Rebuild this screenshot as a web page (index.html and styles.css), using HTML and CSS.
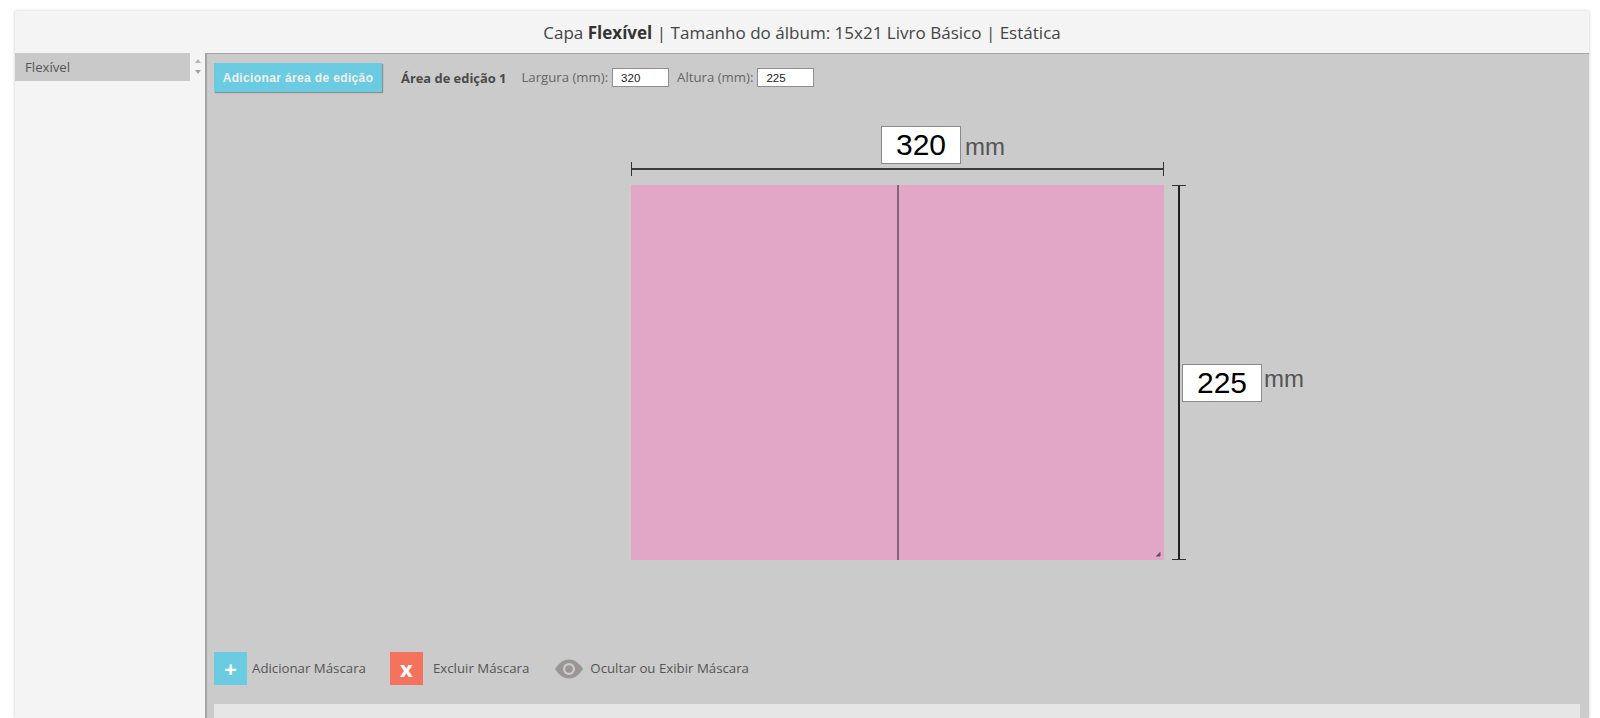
FILE: index.html
```html
<!DOCTYPE html>
<html lang="pt-BR">
<head>
<meta charset="utf-8">
<title>Capa Flexível</title>
<link rel="stylesheet" href="styles.css">
</head>
<body>
<div class="app">
  <header class="title">Capa <b>Flexível</b> | Tamanho do álbum: 15x21 Livro Básico | Estática</header>
  <div class="body">
    <aside class="side">
      <div class="list-item">Flexível</div>
      <div class="arrows"><span class="arrow up"></span><span class="arrow down"></span></div>
    </aside>
    <main class="main">
      <div class="toolbar">
        <button class="add-area">Adicionar área de edição</button>
        <strong class="area-name">Área de edição 1</strong>
        <label class="field">Largura (mm):<input class="small-input" value="320"></label>
        <label class="field">Altura (mm):<input class="small-input" value="225"></label>
      </div>
      <div class="stage">
        <div class="dim-h">
          <div class="dim-h-value"><input class="big-input" value="320"><span class="unit">mm</span></div>
          <div class="bar-h"></div>
        </div>
        <div class="blank"></div>
        <div class="sheet">
          <div class="fold"></div>
          <svg class="grip" width="5" height="5" viewBox="0 0 5 5"><path d="M4.500 .5 .5 4.500M4.500 2.500 2.500 4.500" stroke="#5f4252" stroke-width="1.200" fill="none"/></svg>
        </div>
        <div class="dim-v">
          <div class="bar-v"></div>
          <div class="dim-v-value"><input class="big-input" value="225"><span class="unit unit-v">mm</span></div>
        </div>
      </div>
      <div class="tools">
        <button class="tool"><span class="tool-icon blue">+</span><span class="tool-label near">Adicionar Máscara</span></button>
        <button class="tool"><span class="tool-icon red">x</span><span class="tool-label">Excluir Máscara</span></button>
        <button class="tool">
          <svg class="eye" width="28" height="20" viewBox="0 0 28 20"><path d="M0 10C4 3.500 9 .5 14 .5S24 3.500 28 10C24 16.500 19 19.500 14 19.500S4 16.500 0 10Z" fill="#9b9696"/><circle cx="14" cy="10" r="6" fill="#cbcbcb"/><circle cx="14" cy="10" r="3.800" fill="#9b9696"/></svg>
          <span class="tool-label eye-label">Ocultar ou Exibir Máscara</span>
        </button>
      </div>
      <div class="panel"></div>
    </main>
  </div>
</div>
</body>
</html>
```
FILE: styles.css
```css
* { box-sizing: border-box; }
html, body { margin: 0; height: 100%; overflow: hidden; background: #fff; }
body { padding: 11px 11px 0 15px; font-family: "Open Sans", sans-serif; color: #4a4a4a; }
.app { height: 707px; display: flex; flex-direction: column; background: #f4f4f4; box-shadow: 0 0 3px rgba(0,0,0,.22); overflow: hidden; }
.title { height: 42px; flex: none; font-size: 17.050px; color: #444; text-align: center; line-height: 43px; }
.title b { color: #333; }
.body { flex: 1; display: flex; min-height: 0; }
.side { width: 190px; flex: none; display: flex; align-items: flex-start; }
.list-item { width: 175px; height: 28px; background: #c9c9c9; padding-left: 10px; font-size: 13.200px; line-height: 28px; color: #555; }
.arrows { width: 15px; padding: 6px 0 0 5px; display: flex; flex-direction: column; gap: 7px; }
.arrow { width: 0; height: 0; border-left: 3.500px solid transparent; border-right: 3.500px solid transparent; }
.arrow.up { border-bottom: 4px solid #b5b5b5; }
.arrow.down { border-top: 4px solid #a5a5a5; }
.main { flex: 1; min-width: 0; background: #cbcbcb; border-left: 2px solid #a3a3a3; border-top: 1px solid #a3a3a3; }
.toolbar { height: 72px; padding: 9px 0 0 7px; display: flex; align-items: flex-start; }
.add-area { width: 168px; height: 29px; border: 0; padding: 0; background: #6bcbe0; color: #f0f0f0; font: bold 12px "Liberation Sans", sans-serif; letter-spacing: .36px; box-shadow: 1px 1px 1px rgba(0,0,0,.3); }
.area-name { margin: 6px 0 0 19px; font-size: 12.900px; line-height: 18px; color: #4a4a4a; font-weight: 700; }
.field { margin: 5px 0 0 15px; display: flex; align-items: center; font-size: 13.200px; line-height: 19px; color: #666; }
.field + .field { margin-left: 8px; }
.small-input { width: 57px; height: 19px; margin-left: 4px; padding: 0 0 0 8px; border: 1px solid #8f8f8f; background: #fff; color: #222; font: 11.500px "Liberation Sans", sans-serif; }
.stage { margin-left: 424px; display: grid; grid-template-columns: 533px auto; grid-template-rows: 59px 375px; }
.dim-h { display: flex; flex-direction: column; }
.dim-h-value { height: 36px; padding-left: 250px; display: flex; align-items: flex-start; }
.bar-h { height: 14px; border-left: 1px solid #333; border-right: 1px solid #333; }
.bar-h::before { content: ""; display: block; height: 1.500px; margin-top: 6px; background: #3c3c3c; }
.blank { min-width: 0; }
.big-input { width: 80px; height: 38px; flex: none; border: 1px solid #8a8a8a; padding: 0; background: #fff; color: #000; text-align: center; font: 30px "Liberation Sans", sans-serif; }
.unit { margin: 7px 0 0 4px; font: 24px/28px "Liberation Sans", sans-serif; color: #555; }
.unit-v { margin: 1px 0 0 2px; }
.sheet { background: #e2a6c6; position: relative; }
.fold { width: 2px; height: 100%; margin-left: 266px; background: #86657a; }
.grip { position: absolute; right: 3px; bottom: 3px; }
.dim-v { display: flex; align-items: flex-start; margin-left: 8px; }
.bar-v { width: 14px; height: 375px; flex: none; border-top: 1.500px solid #333; border-bottom: 1.500px solid #333; display: flex; justify-content: center; }
.bar-v::before { content: ""; width: 2px; background: #222; }
.dim-v-value { margin: 179px 0 0 -4px; display: flex; align-items: flex-start; }
.tools { margin-top: 92px; padding-left: 7px; display: flex; align-items: center; height: 33px; }
.tool { display: flex; align-items: center; height: 33px; padding: 0; border: 0; background: none; font: 13.250px "Open Sans", sans-serif; color: #555; }
.tool-icon { width: 33px; height: 33px; display: flex; align-items: center; justify-content: center; color: #fff; font: bold 22px/33px "Open Sans", sans-serif; }
.tool-icon.blue { background: #6bcbe0; }
.tool-icon.red { background: #f4735f; margin-left: 24px; }
.tool-label { margin: 0 0 2px 10px; }
.tool-label.near { margin-left: 5px; }
.eye { margin-left: 26px; }
.eye-label { margin-left: 7px; }
.panel { margin: 19px 9px 0 7px; height: 40px; background: #e6e6e6; }
```
